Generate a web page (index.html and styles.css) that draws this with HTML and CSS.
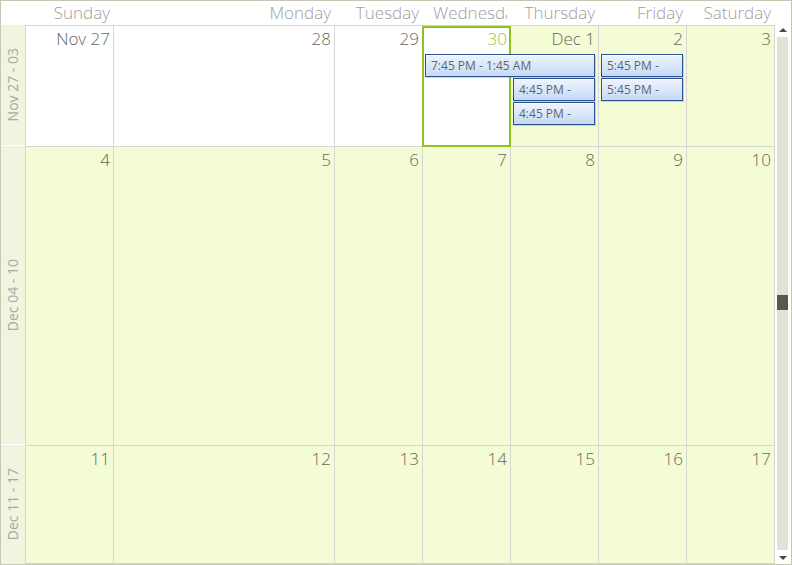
FILE: index.html
```html
<!DOCTYPE html>
<html>
<head>
<meta charset="utf-8">
<link rel="stylesheet" href="styles.css">
</head>
<body>
<div class="cal">
  <div class="labels">
    <div class="corner"></div>
    <div class="wl wl1"><span>Nov 27 - 03</span></div>
    <div class="wl wl2"><span>Dec 04 - 10</span></div>
    <div class="wl wl3"><span>Dec 11 - 17</span></div>
  </div>
  <div class="main">
    <div class="head">
      <div class="dn"><span class="t">Sunday</span></div>
      <div class="dn"><span class="t">Monday</span></div>
      <div class="dn"><span class="t">Tuesday</span></div>
      <div class="dn"><span class="t">Wednesday</span></div>
      <div class="dn"><span class="t">Thursday</span></div>
      <div class="dn"><span class="t">Friday</span></div>
      <div class="dn"><span class="t">Saturday</span></div>
    </div>
    <div class="weeks">
      <div class="week w1">
        <div class="day wh c1"><span class="num">Nov 27</span></div>
        <div class="day wh c2"><span class="num">28</span></div>
        <div class="day wh c3"><span class="num">29</span></div>
        <div class="day wh c4 today"><span class="num">30</span></div>
        <div class="day c5"><span class="num">Dec 1</span></div>
        <div class="day c6"><span class="num">2</span></div>
        <div class="day c7"><span class="num">3</span></div>
        <div class="appt a-wt">7:45 PM - 1:45 AM</div>
        <div class="appt a-t1">4:45 PM -</div>
        <div class="appt a-t2">4:45 PM -</div>
        <div class="appt a-f1">5:45 PM -</div>
        <div class="appt a-f2">5:45 PM -</div>
      </div>
      <div class="week w2">
        <div class="day c1"><span class="num">4</span></div>
        <div class="day c2"><span class="num">5</span></div>
        <div class="day c3"><span class="num">6</span></div>
        <div class="day c4"><span class="num">7</span></div>
        <div class="day c5"><span class="num">8</span></div>
        <div class="day c6"><span class="num">9</span></div>
        <div class="day c7"><span class="num">10</span></div>
      </div>
      <div class="week w3">
        <div class="day c1"><span class="num">11</span></div>
        <div class="day c2"><span class="num">12</span></div>
        <div class="day c3"><span class="num">13</span></div>
        <div class="day c4"><span class="num">14</span></div>
        <div class="day c5"><span class="num">15</span></div>
        <div class="day c6"><span class="num">16</span></div>
        <div class="day c7"><span class="num">17</span></div>
      </div>
    </div>
  </div>
  <div class="scroll">
    <div class="sb-up"><span class="tri-up"></span></div>
    <div class="track"><div class="thumb"></div></div>
    <div class="sb-down"><span class="tri-down"></span></div>
  </div>
</div>
</body>
</html>
```
FILE: styles.css
```css
html, body {
  margin: 0;
  padding: 0;
  background: #fff;
}

.cal {
  display: flex;
  width: 790px;
  height: 563px;
  border: 1px solid #c5c8b4;
  background: #fff;
  font-family: "Open Sans", "Noto Sans", sans-serif;
}

/* week labels column */
.labels {
  width: 24px;
  display: flex;
  flex-direction: column;
}
.corner {
  height: 24px;
  background: #fff;
}
.wl {
  background: #f1f4de;
  border-bottom: 1px solid #fff;
  display: flex;
  align-items: center;
  justify-content: center;
  overflow: hidden;
}
.wl1 { height: 120px; }
.wl2 { height: 298px; }
.wl3 { flex: 1; border-bottom: 0; }
.wl span {
  writing-mode: vertical-rl;
  transform: rotate(180deg);
  font-size: 14px;
  font-weight: 400;
  line-height: 16px;
  color: #a8a8a8;
  white-space: nowrap;
}

/* main area */
.main {
  width: 750px;
  display: flex;
  flex-direction: column;
}
.head {
  height: 24px;
  padding: 0 1px;
  border-bottom: 1px solid #d6d6d6;
  display: grid;
  grid-template-columns: 87px 220px 87px 87px 87px 87px 87px;
  column-gap: 1px;
}
.dn {
  padding: 0 3px 0 10px;
  min-width: 0;
}
.dn .t {
  display: block;
  overflow: hidden;
  white-space: nowrap;
  text-align: right;
  font-size: 17px;
  font-weight: 300;
  line-height: 23px;
  color: #a0a0a0;
}

.weeks {
  flex: 1;
  display: flex;
  flex-direction: column;
  border-left: 1px solid #d6d6d6;
  border-right: 1px solid #d6d6d6;
}
.week {
  display: grid;
  grid-template-columns: 87px 220px 87px 87px 87px 87px 87px;
  grid-template-rows: 28px 24px 24px 24px 1fr;
  column-gap: 1px;
  background: #d6d6d6;
  border-bottom: 1px solid #d6d6d6;
}
.w1 { height: 120px; }
.w2 { height: 298px; }
.w3 { height: 117px; }

.day {
  grid-row: 1 / -1;
  background: #f3fcd4;
}
.day.wh { background: #fff; }
.c1 { grid-column: 1; }
.c2 { grid-column: 2; }
.c3 { grid-column: 3; }
.c4 { grid-column: 4; }
.c5 { grid-column: 5; }
.c6 { grid-column: 6; }
.c7 { grid-column: 7; }

.num {
  display: block;
  text-align: right;
  padding: 1px 3px 0 0;
  font-size: 17px;
  font-weight: 300;
  line-height: 24px;
  color: #666;
}

.today { position: relative; }
.today::after {
  content: "";
  position: absolute;
  top: 0;
  left: -1px;
  right: -1px;
  bottom: -1px;
  border: 2px solid #8ec21f;
  z-index: 1;
  pointer-events: none;
}
.today .num { color: #98c43a; }

/* appointments */
.appt {
  position: relative;
  z-index: 2;
  align-self: start;
  height: 23px;
  box-sizing: border-box;
  margin: 0 3px 0 2px;
  padding-left: 5px;
  border: 1px solid #2c5291;
  background: linear-gradient(#eef4fd, #c5daf6);
  box-shadow: inset 0 1px 0 rgba(255,255,255,0.8), 1px 1px 0 rgba(110,120,130,0.3);
  font-size: 12px;
  line-height: 21px;
  color: #5e6670;
  white-space: nowrap;
  overflow: hidden;
}
.a-wt { grid-column: 4 / 6; grid-row: 2; }
.a-t1 { grid-column: 5; grid-row: 3; }
.a-t2 { grid-column: 5; grid-row: 4; }
.a-f1 { grid-column: 6; grid-row: 2; }
.a-f2 { grid-column: 6; grid-row: 3; }

/* scrollbar */
.scroll {
  width: 16px;
  display: flex;
  flex-direction: column;
  background: #fff;
}
.sb-up {
  height: 36px;
  box-sizing: border-box;
  padding: 27px 0 0 4px;
}
.tri-up {
  display: block;
  width: 0;
  height: 0;
  border-left: 4px solid transparent;
  border-right: 4px solid transparent;
  border-bottom: 4px solid #4a4a4a;
}
.track {
  flex: 1;
  width: 11px;
  margin-left: 2px;
  background: #e3e3d5;
}
.thumb {
  margin-top: 258px;
  height: 15px;
  background: #565853;
}
.sb-down {
  height: 14px;
  box-sizing: border-box;
  padding: 6px 0 0 4px;
}
.tri-down {
  display: block;
  width: 0;
  height: 0;
  border-left: 4px solid transparent;
  border-right: 4px solid transparent;
  border-top: 4px solid #4a4a4a;
}
```
